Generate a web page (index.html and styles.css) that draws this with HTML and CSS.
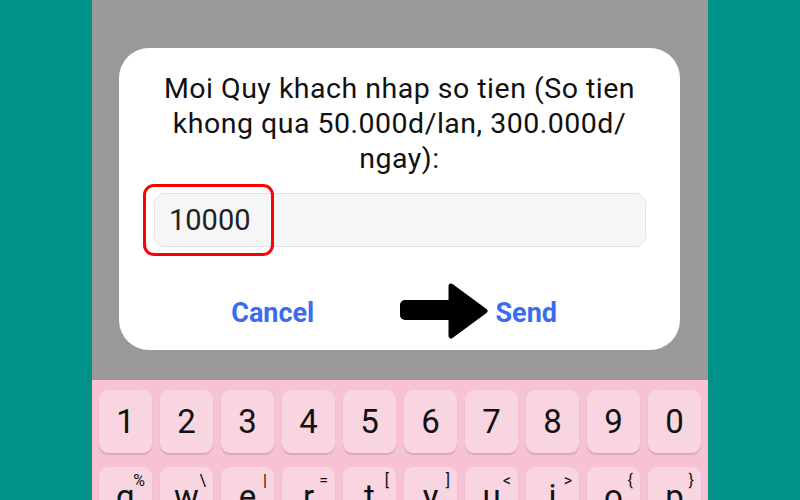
FILE: index.html
```html
<!DOCTYPE html>
<html lang="en">
  <head>
    <meta charset="UTF-8" />
    <meta name="viewport" content="width=device-width, initial-scale=1.0" />
    <title>Nhap so tien</title>
    <link rel="stylesheet" href="styles.css">
  </head>

  <body>
    <div class="side"></div>

    <div class="phone">
      <div class="overlay">
        <div class="dialog">
          <p class="title">
            Moi Quy khach nhap so tien (So tien<br />
            khong qua 50.000d/lan, 300.000d/<br />
            ngay):
          </p>

          <div class="field">
            <input type="text" class="amount" value="10000" />
            <span class="highlight"></span>
          </div>

          <div class="actions">
            <button class="action">Cancel</button>
            <button class="action">Send</button>
          </div>

          <!-- arrow pointing at Send -->
          <svg class="arrow" width="90" height="58" viewBox="0 0 90 58">
            <rect x="1" y="17" width="54" height="20" rx="5" fill="#000" />
            <polygon
              points="52,3 86,28 52,53"
              fill="#000"
              stroke="#000"
              stroke-width="5"
              stroke-linejoin="round"
            />
          </svg>
        </div>
      </div>

      <div class="keyboard">
        <div class="row">
          <div class="key">1</div>
          <div class="key">2</div>
          <div class="key">3</div>
          <div class="key">4</div>
          <div class="key">5</div>
          <div class="key">6</div>
          <div class="key">7</div>
          <div class="key">8</div>
          <div class="key">9</div>
          <div class="key">0</div>
        </div>
        <div class="row">
          <div class="key letter">q<span class="alt">%</span></div>
          <div class="key letter">w<span class="alt">\</span></div>
          <div class="key letter">e<span class="alt">|</span></div>
          <div class="key letter">r<span class="alt">=</span></div>
          <div class="key letter">t<span class="alt">[</span></div>
          <div class="key letter">y<span class="alt">]</span></div>
          <div class="key letter">u<span class="alt">&lt;</span></div>
          <div class="key letter">i<span class="alt">&gt;</span></div>
          <div class="key letter">o<span class="alt">{</span></div>
          <div class="key letter">p<span class="alt">}</span></div>
        </div>
      </div>
    </div>

    <div class="side"></div>
  </body>
</html>
```

FILE: styles.css
```css
* {
  margin: 0;
  padding: 0;
  box-sizing: border-box;
}

body {
  display: flex;
  width: 800px;
  height: 500px;
  overflow: hidden;
  background-color: #00918a;
  font-family: Roboto, "Liberation Sans", sans-serif;
}

.side {
  flex: 1;
  background-color: #00918a;
}

.phone {
  width: 616px;
  height: 500px;
  display: flex;
  flex-direction: column;
}

.overlay {
  height: 380px;
  flex-shrink: 0;
  background-color: #999999;
  padding: 48px 0 0 27px;
}

.dialog {
  position: relative;
  width: 561px;
  height: 302px;
  background-color: #fff;
  border-radius: 30px;
  padding-top: 23px;
}

.title {
  text-align: center;
  font-size: 28.5px;
  letter-spacing: 0.5px;
  line-height: 35px;
  color: #111;
}

.field {
  position: relative;
  margin: 17px 34px 0 35px;
}

.amount {
  width: 100%;
  height: 54px;
  padding: 0 14px;
  font-family: inherit;
  font-size: 29px;
  color: #222;
  background-color: #f6f6f6;
  border: 1px solid #e2e2e2;
  border-radius: 10px;
  outline: none;
}

.highlight {
  position: absolute;
  left: -11px;
  top: -9px;
  width: 131px;
  height: 72px;
  border: 3px solid #f00;
  border-radius: 11px;
}

.actions {
  display: grid;
  grid-template-columns: 1fr 1fr;
  padding: 0 27px;
  margin-top: 50px;
}

.action {
  background: none;
  border: none;
  font-family: inherit;
  font-size: 27px;
  font-weight: bold;
  color: #3b6cf0;
  line-height: 32px;
}

.arrow {
  position: absolute;
  left: 280px;
  top: 235px;
}

.keyboard {
  flex: 1;
  overflow: hidden;
  background-color: #f6c2d4;
  padding: 10px 7px 0;
  display: flex;
  flex-direction: column;
  gap: 14px;
}

.row {
  display: flex;
  gap: 8px;
}

.key {
  position: relative;
  width: 53px;
  height: 63px;
  flex-shrink: 0;
  background-color: #f9d4e1;
  border-radius: 9px;
  box-shadow: 0 2px 1px rgba(150, 80, 110, 0.25);
  text-align: center;
  font-size: 33px;
  line-height: 63px;
  color: #111;
}

.letter {
  line-height: 60px;
}

.alt {
  position: absolute;
  top: 5px;
  right: 7px;
  font-size: 16px;
  line-height: 18px;
}
```
